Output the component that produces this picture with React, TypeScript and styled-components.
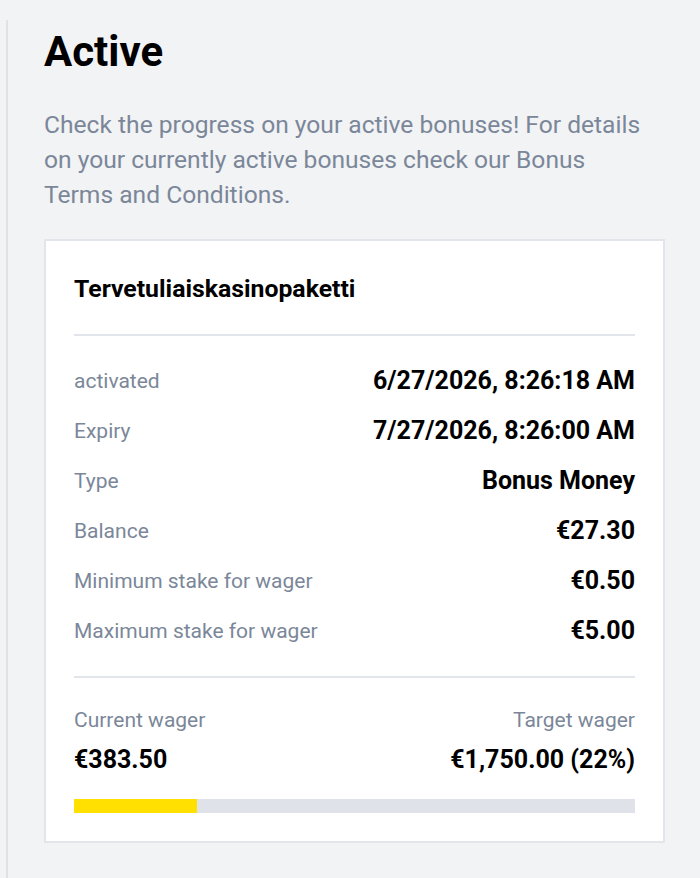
import styled, { createGlobalStyle } from "styled-components";

const GlobalStyle = createGlobalStyle`
  html, body {
    margin: 0;
    padding: 0;
    background: #f2f3f5;
    font-family: Roboto, "Liberation Sans", Arial, sans-serif;
  }
`;

type Row = { label: string; value: string };

const rows: Row[] = [
  { label: "activated", value: "6/27/2026, 8:26:18 AM" },
  { label: "Expiry", value: "7/27/2026, 8:26:00 AM" },
  { label: "Type", value: "Bonus Money" },
  { label: "Balance", value: "€27.30" },
  { label: "Minimum stake for wager", value: "€0.50" },
  { label: "Maximum stake for wager", value: "€5.00" },
];

const progress = 22;

export default function App() {
  return (
    <>
      <GlobalStyle />
      <Page>
        <Section>
          <Heading>Active</Heading>
          <Intro>
            Check the progress on your active bonuses! For details on your currently active bonuses
            check our Bonus Terms and Conditions.
          </Intro>
          <Card>
            <Title>Tervetuliaiskasinopaketti</Title>
            <Details>
              {rows.map((r) => (
                <DetailRow key={r.label}>
                  <Label>{r.label}</Label>
                  <Value>{r.value}</Value>
                </DetailRow>
              ))}
            </Details>
            <Wager>
              <WagerCol>
                <Label>Current wager</Label>
                <Value>€383.50</Value>
              </WagerCol>
              <WagerCol $right>
                <Label>Target wager</Label>
                <Value>€1,750.00 ({progress}%)</Value>
              </WagerCol>
            </Wager>
            <Track>
              <Fill style={{ width: `${progress}%` }} />
            </Track>
          </Card>
        </Section>
      </Page>
    </>
  );
}

const Page = styled.div`
  min-height: 878px;
  padding: 20px 0 0 6px;
  box-sizing: border-box;
  display: flex;
`;

const Section = styled.div`
  flex: 1;
  border-left: 2px solid #dfe2e7;
  padding: 8px 35px 36px 36px;
  min-height: 858px;
  box-sizing: border-box;
`;

const Heading = styled.h1`
  margin: 0;
  font-size: 42px;
  line-height: 48px;
  font-weight: 700;
  color: #000;
`;

const Intro = styled.p`
  margin: 31px 12px 27px 0;
  font-size: 24.6px;
  line-height: 35px;
  color: #7b8799;
`;

const Card = styled.div`
  background: #fff;
  border: 2px solid #e2e5ea;
  padding: 34px 28px 28px;
`;

const Title = styled.div`
  font-size: 24.8px;
  line-height: 28px;
  font-weight: 700;
  color: #000;
  padding-bottom: 31px;
  border-bottom: 2px solid #e2e5ea;
`;

const Details = styled.div`
  display: flex;
  flex-direction: column;
  padding: 20px 0 20px;
  border-bottom: 2px solid #e2e5ea;
`;

const DetailRow = styled.div`
  display: flex;
  justify-content: space-between;
  align-items: center;
  height: 50px;
`;

const Label = styled.span`
  font-size: 21px;
  line-height: 30px;
  color: #7b8799;
`;

const Value = styled.span`
  font-size: 25px;
  line-height: 30px;
  font-weight: 700;
  color: #000;
`;

const Wager = styled.div`
  display: flex;
  justify-content: space-between;
  padding-top: 27px;
`;

const WagerCol = styled.div<{ $right?: boolean }>`
  display: flex;
  flex-direction: column;
  gap: 10px;
  align-items: ${(p) => (p.$right ? "flex-end" : "flex-start")};
`;

const Track = styled.div`
  margin-top: 24px;
  height: 14px;
  background: #dfe2e8;
`;

const Fill = styled.div`
  height: 100%;
  background: #ffe000;
`;
